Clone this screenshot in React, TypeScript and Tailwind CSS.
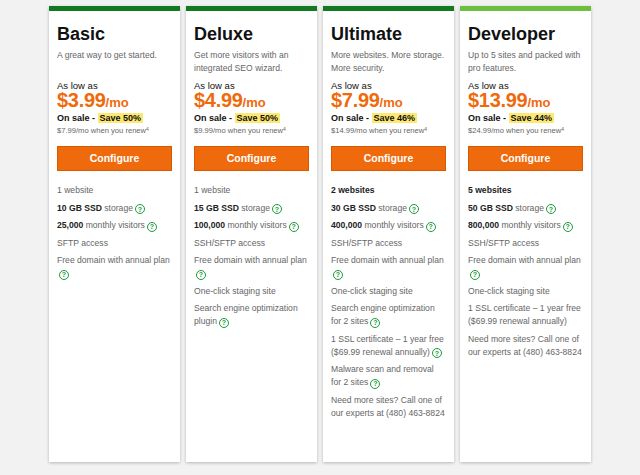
const Q = () => (
  <span className="inline-flex items-center justify-center w-[10px] h-[10px] rounded-full border border-[#1a9a3a] text-[#1a9a3a] text-[7px] font-bold leading-none align-[-1px] ml-[2px]">?</span>
);

type F = { t: React.ReactNode; q?: boolean };
const plans: { name: string; desc: string; price: string; save: string; renew: string; top: string; feats: F[] }[] = [
  { name: "Basic", desc: "A great way to get started.", price: "$3.99", save: "Save 50%", renew: "$7.99/mo when you renew", top: "bg-[#137a22]",
    feats: [
      { t: "1 website" },
      { t: <><b className="text-[#222] font-bold">10 GB SSD</b> storage</>, q: true },
      { t: <><b className="text-[#222] font-bold">25,000</b> monthly visitors</>, q: true },
      { t: "SFTP access" },
      { t: "Free domain with annual plan", q: true },
    ] },
  { name: "Deluxe", desc: "Get more visitors with an integrated SEO wizard.", price: "$4.99", save: "Save 50%", renew: "$9.99/mo when you renew", top: "bg-[#137a22]",
    feats: [
      { t: "1 website" },
      { t: <><b className="text-[#222] font-bold">15 GB SSD</b> storage</>, q: true },
      { t: <><b className="text-[#222] font-bold">100,000</b> monthly visitors</>, q: true },
      { t: "SSH/SFTP access" },
      { t: "Free domain with annual plan", q: true },
      { t: "One-click staging site" },
      { t: "Search engine optimization plugin", q: true },
    ] },
  { name: "Ultimate", desc: "More websites. More storage. More security.", price: "$7.99", save: "Save 46%", renew: "$14.99/mo when you renew", top: "bg-[#137a22]",
    feats: [
      { t: <b className="text-[#222] font-bold">2 websites</b> },
      { t: <><b className="text-[#222] font-bold">30 GB SSD</b> storage</>, q: true },
      { t: <><b className="text-[#222] font-bold">400,000</b> monthly visitors</>, q: true },
      { t: "SSH/SFTP access" },
      { t: "Free domain with annual plan", q: true },
      { t: "One-click staging site" },
      { t: "Search engine optimization for 2 sites", q: true },
      { t: "1 SSL certificate – 1 year free ($69.99 renewal annually)", q: true },
      { t: "Malware scan and removal for 2 sites", q: true },
      { t: "Need more sites? Call one of our experts at (480) 463-8824" },
    ] },
  { name: "Developer", desc: "Up to 5 sites and packed with pro features.", price: "$13.99", save: "Save 44%", renew: "$24.99/mo when you renew", top: "bg-[#6dbf3f]",
    feats: [
      { t: <b className="text-[#222] font-bold">5 websites</b> },
      { t: <><b className="text-[#222] font-bold">50 GB SSD</b> storage</>, q: true },
      { t: <><b className="text-[#222] font-bold">800,000</b> monthly visitors</>, q: true },
      { t: "SSH/SFTP access" },
      { t: "Free domain with annual plan", q: true },
      { t: "One-click staging site" },
      { t: "1 SSL certificate – 1 year free ($69.99 renewal annually)" },
      { t: "Need more sites? Call one of our experts at (480) 463-8824" },
    ] },
];

export default function App() {
  return (
    <div className="w-[640px] h-[475px] bg-[#f2f2f2] overflow-hidden flex items-start gap-[6px] pl-[49px] pt-[6px]" style={{ fontFamily: '"Liberation Sans", Arial, sans-serif' }}>
      {plans.map((p) => (
        <div key={p.name} className="w-[131px] h-[456px] shrink-0 bg-white shadow-[0_1px_3px_rgba(0,0,0,0.25)] flex flex-col overflow-hidden">
          <div className={`h-[5px] shrink-0 ${p.top}`} />
          <div className="px-[8px] pt-[12px] flex flex-col">
            <div className="text-[18px] font-bold text-[#111] leading-[22px]">{p.name}</div>
            <div className="mt-[4px] h-[30px] text-[8.6px] leading-[13px] text-[#666]">{p.desc}</div>
            <div className="mt-[1px] text-[9.5px] leading-[11px] text-[#111]">As low as</div>
            <div className="text-[#ef6a0c] font-bold leading-[19px]"><span className="text-[20px] tracking-[-0.3px]">{p.price}</span><span className="text-[13px]">/mo</span></div>
            <div className="text-[9px] leading-[13px] text-[#111] font-bold">On sale - <span className="bg-[#fde872] px-[2px]">{p.save}</span></div>
            <div className="text-[7.6px] leading-[11px] text-[#666]">{p.renew}<sup className="text-[5px]">4</sup></div>
            <div className="mt-[10px] h-[25px] bg-[#ef6a0c] border border-[#d85a00] text-white font-bold text-[10.5px] flex items-center justify-center">Configure</div>
            <div className="mt-[13px] flex flex-col gap-[4.5px]">
              {p.feats.map((f, i) => (
                <div key={i} className="text-[8.6px] leading-[13px] text-[#666]">{f.t}{f.q && <Q />}</div>
              ))}
            </div>
          </div>
        </div>
      ))}
    </div>
  );
}
